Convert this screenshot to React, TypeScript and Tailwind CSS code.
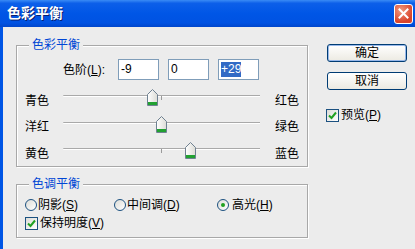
import React from "react";

const FONT = { fontFamily: '"Liberation Sans", "Noto Sans CJK SC", sans-serif' };

function Thumb() {
  return (
    <svg width="11" height="17" viewBox="0 0 11 17">
      <defs>
        <linearGradient id="tg" x1="0" y1="0" x2="1" y2="0">
          <stop offset="0" stopColor="#ffffff" />
          <stop offset="1" stopColor="#dcdcd6" />
        </linearGradient>
      </defs>
      <path d="M5.5 0.5 L10.5 5.5 V16.5 H0.5 V5.5 Z" fill="url(#tg)" stroke="#6f8191" />
      <rect x="1" y="13" width="9" height="3" fill="#21a131" />
    </svg>
  );
}

function Slider({ left, right, value }: { left: string; right: string; value: number }) {
  // track 197px wide, 0 at centre
  const x = 98.5 + value * 0.985;
  return (
    <div className="flex h-full items-center">
      <span className="mt-[9px] w-[38px] pl-[8px] box-content leading-none">{left}</span>
      <div className="relative h-[2px] w-[197px] rounded-l-full border-t border-[#a9a9a9] bg-white">
        <div className="absolute left-[98px] top-0 h-[4px] w-px bg-[#9a9a9a]" />
        <div className="absolute top-[-7px]" style={{ left: x - 5.5 }}>
          <Thumb />
        </div>
      </div>
      <span className="ml-[15px] mt-[9px] leading-none">{right}</span>
    </div>
  );
}

function Radio({ checked }: { checked?: boolean }) {
  return (
    <span className="flex h-[12px] w-[12px] items-center justify-center rounded-full border border-[#1c5180] bg-gradient-to-br from-[#dcdcd7] to-white">
      {checked && <span className="h-[4px] w-[4px] rounded-full bg-[#21a121]" />}
    </span>
  );
}

function Check() {
  return (
    <span className="flex h-[13px] w-[13px] items-center justify-center border border-[#1c5180] bg-gradient-to-br from-[#dcdcd7] to-white">
      <svg width="9" height="9" viewBox="0 0 9 9">
        <path d="M1 4.5 L3.5 7 L8 1.5" fill="none" stroke="#21a121" strokeWidth="2" />
      </svg>
    </span>
  );
}

function Key({ k }: { k: string }) {
  return (
    <>
      (<span className="underline">{k}</span>)
    </>
  );
}

function Button({ children, focused }: { children: React.ReactNode; focused?: boolean }) {
  return (
    <div
      className={`flex h-[18px] w-[80px] items-center justify-center rounded-[3px] border border-[#003c74] bg-gradient-to-b from-white to-[#eceae2] ${
        focused ? "shadow-[inset_0_0_0_1px_#98b8ea]" : ""
      }`}
    >
      {children}
    </div>
  );
}

export default function App() {
  const group = "relative border border-[#a8a8a8] shadow-[inset_1px_1px_0_#fff,1px_1px_0_#fff]";
  const legend = "absolute left-[12px] top-[-9px] bg-[#ececec] px-[3px] leading-[16px] text-[#0046d5]";
  return (
    <div className="flex h-[249px] w-[415px] flex-col overflow-hidden text-[12px] text-black" style={FONT}>
      {/* Title bar */}
      <div className="flex h-[27px] items-center justify-between bg-[linear-gradient(to_bottom,#3a8bf5_0%,#0c5fe9_12%,#0056e6_50%,#0052e2_85%,#0046cc_100%)] pl-[7px] pr-[2px]">
        <span className="text-[14px] font-bold text-white [text-shadow:1px_1px_0_#0a1e6e]">色彩平衡</span>
        <div className="flex h-[20px] w-[19px] items-center justify-center rounded-[3px] border border-white bg-[radial-gradient(circle_at_35%_30%,#f29a80,#d9432a_70%)]">
          <svg width="11" height="11" viewBox="0 0 11 11">
            <path d="M1.5 1.5 L9.5 9.5 M9.5 1.5 L1.5 9.5" stroke="white" strokeWidth="2" strokeLinecap="square" />
          </svg>
        </div>
      </div>

      {/* Body */}
      <div className="flex flex-1 border-l-[3px] border-[#0055e5] bg-[#ececec] pl-[13px]">
        <div className="flex w-[292px] flex-col pt-[18px]">
          {/* 色彩平衡 */}
          <div className={`${group} h-[122px] pt-[13px]`}>
            <span className={legend}>色彩平衡</span>
            <div className="flex h-[21px] items-center pl-[46px]">
              <span className="w-[55px]">
                色阶<Key k="L" />:
              </span>
              <div className="flex gap-[9px]">
                <div className="h-[21px] w-[41px] border border-[#7f9db9] bg-white pl-[2px] leading-[19px]">-9</div>
                <div className="h-[21px] w-[41px] border border-[#7f9db9] bg-white pl-[2px] leading-[19px]">0</div>
                <div className="flex h-[21px] w-[41px] items-center border border-[#7f9db9] bg-white pl-[2px]">
                  <span className="bg-[#316ac5] leading-[15px] text-white">+29</span>
                </div>
              </div>
            </div>
            <div className="mt-[3px] h-[26px]">
              <Slider left="青色" right="红色" value={-9} />
            </div>
            <div className="h-[27px]">
              <Slider left="洋红" right="绿色" value={0} />
            </div>
            <div className="h-[26px]">
              <Slider left="黄色" right="蓝色" value={29} />
            </div>
          </div>

          {/* 色调平衡 */}
          <div className={`${group} mt-[17px] h-[54px] pl-[8px] pt-[13px]`}>
            <span className={legend}>色调平衡</span>
            <div className="flex h-[14px] items-center">
              <div className="flex w-[89px] items-center gap-[1px]">
                <Radio />
                <span>
                  阴影<Key k="S" />
                </span>
              </div>
              <div className="flex w-[103px] items-center gap-[1px]">
                <Radio />
                <span>
                  中间调<Key k="D" />
                </span>
              </div>
              <div className="flex items-center gap-[3px]">
                <Radio checked />
                <span>
                  高光<Key k="H" />
                </span>
              </div>
            </div>
            <div className="mt-[4px] flex h-[14px] items-center gap-[2px]">
              <Check />
              <span>
                保持明度<Key k="V" />
              </span>
            </div>
          </div>
        </div>

        {/* Right column */}
        <div className="ml-[19px] flex flex-col pt-[17px]">
          <Button focused>确定</Button>
          <div className="mt-[10px]">
            <Button>取消</Button>
          </div>
          <div className="ml-[-1px] mt-[16px] flex items-center gap-[2px]">
            <Check />
            <span>
              预览<Key k="P" />
            </span>
          </div>
        </div>
      </div>
    </div>
  );
}
